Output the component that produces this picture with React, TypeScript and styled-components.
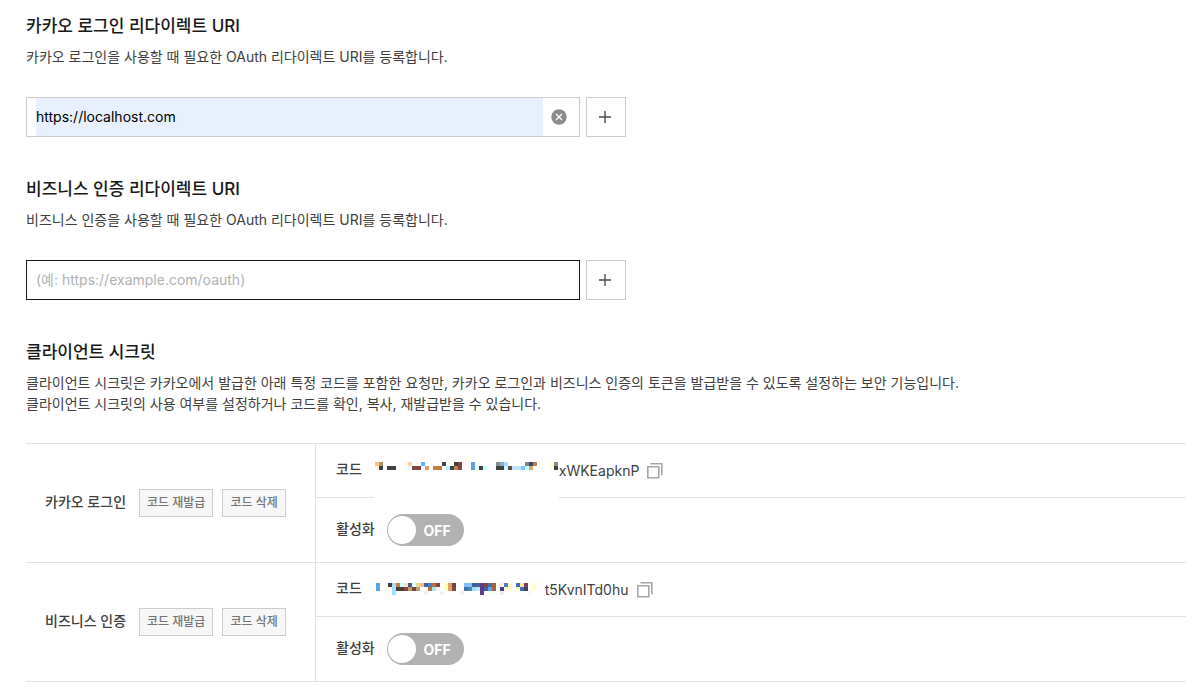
import React, { useState } from "react";
import styled, { createGlobalStyle } from "styled-components";

const GlobalStyle = createGlobalStyle`
  * { box-sizing: border-box; }
  body {
    margin: 0;
    background: #fff;
    color: #404040;
    font-family: Inter, "Noto Sans CJK KR", sans-serif;
    font-size: 14px;
    line-height: 21px;
  }
  button, input { font: inherit; }
`;

const Page = styled.main`
  padding: 14px 15px 8px 26px;
`;

const Section = styled.section`
  & + & { margin-top: 40px; }
`;

const Title = styled.h2`
  margin: 0 0 8px;
  color: #191919;
  font-size: 17px;
  font-weight: 500;
  line-height: 24px;
`;

const Description = styled.p`
  margin: 0;
`;

const UriRow = styled.div`
  display: flex;
  gap: 6px;
  max-width: 600px;
  margin-top: 30px;
`;

const Field = styled.div<{ $active?: boolean }>`
  display: flex;
  flex: 1;
  min-width: 0;
  height: 40px;
  padding: 0 0 0 9px;
  border: 1px solid ${(p) => (p.$active ? "#191919" : "#ccc")};
`;

const UriInput = styled.input<{ $filled?: boolean }>`
  flex: 1;
  min-width: 0;
  padding: 0 0 2px;
  border: 0;
  outline: 0;
  background: ${(p) => (p.$filled ? "#e8f0fe" : "transparent")};
  color: #000;
  font-size: 14px;
  &::placeholder { color: #b2b2b2; opacity: 1; }
`;

const ClearButton = styled.button`
  display: flex;
  align-items: center;
  justify-content: center;
  width: 36px;
  padding: 0 4px 0 0;
  border: 0;
  background: none;
  cursor: pointer;
`;

const AddButton = styled.button`
  display: flex;
  align-items: center;
  justify-content: center;
  width: 40px;
  height: 40px;
  padding: 0 2px 0 0;
  border: 1px solid #ccc;
  background: #fff;
  cursor: pointer;
`;

const SecretTable = styled.table`
  width: 100%;
  margin-top: 29px;
  border-spacing: 0;
  border-top: 1px solid #e2e2e2;
`;

const HeadCell = styled.th`
  width: 290px;
  padding: 0 0 0 19px;
  border-right: 1px solid #e2e2e2;
  border-bottom: 1px solid #e2e2e2;
  font-weight: 500;
  text-align: left;
`;

const HeadContent = styled.div`
  display: flex;
  align-items: center;
`;

const HeadName = styled.span`
  min-width: 82px;
  margin-right: 12px;
  padding-bottom: 4px;
`;

const SmallButton = styled.button`
  height: 28px;
  margin-right: 9px;
  padding: 0 7px;
  border: 1px solid #ccc;
  background: #f7f7f7;
  color: #757575;
  font-size: 12px;
  font-weight: 500;
  line-height: 24px;
  white-space: nowrap;
  cursor: pointer;
`;

const Cell = styled.td<{ $tall?: boolean }>`
  height: ${(p) => (p.$tall ? 65 : 54)}px;
  padding: 0 20px;
  border-bottom: 1px solid #e2e2e2;
`;

const CellContent = styled.div`
  display: flex;
  align-items: center;
  gap: 12px;
`;

const CellLabel = styled.span`
  margin-top: -4px;
  font-weight: 500;
`;

const Code = styled.span`
  display: flex;
  align-items: center;
`;

const MaskSlot = styled.span<{ $width: number }>`
  position: relative;
  width: ${(p) => p.$width}px;
  height: 21px;
`;

const MaskArt = styled.svg`
  position: absolute;
  top: 0;
  left: 0;
  display: block;
`;

const CopyButton = styled.button`
  display: flex;
  margin-left: 7px;
  padding: 0;
  border: 0;
  background: none;
  cursor: pointer;
`;

const Switch = styled.label`
  position: relative;
  display: flex;
  align-items: center;
  width: 77px;
  height: 32px;
  padding: 2px 13px 2px 1px;
  justify-content: space-between;
  border-radius: 16px;
  background: #b2b2b2;
  color: #fff;
  font-weight: 700;
  cursor: pointer;
`;

const SwitchInput = styled.input`
  position: absolute;
  inset: 0;
  width: 100%;
  height: 100%;
  margin: 0;
  opacity: 0;
  cursor: pointer;
`;

const Knob = styled.span`
  width: 28px;
  height: 28px;
  border-radius: 50%;
  background: #fff;
`;

// [x, y, width, colour]; every block is 4px high
type Block = [number, number, number, string];

const LOGIN_MASK: Block[] = [
  [1, 2, 4, "#ffc57f"], [5, 2, 4, "#a8946f"], [34, 2, 4, "#ffd59a"], [47, 2, 4, "#62aef5"],
  [68, 2, 4, "#41425f"], [72, 2, 4, "#fffbe4"], [80, 2, 4, "#414141"], [84, 2, 4, "#864545"],
  [97, 2, 4, "#5fa0e0"], [122, 2, 4, "#8a8a8a"], [126, 2, 4, "#8fa8bf"], [130, 2, 4, "#a0dfff"],
  [151, 2, 4, "#6f8a8a"], [155, 2, 4, "#41425f"], [159, 2, 4, "#b97f50"],
  [176, 2, 4, "#ffffdf"], [180, 2, 4, "#8a8a8a"],
  [1, 6, 4, "#fff3df"], [5, 6, 4, "#414141"], [13, 6, 9, "#414141"], [34, 6, 4, "#dfffff"],
  [38, 6, 9, "#864545"], [51, 6, 4, "#e09a5f"], [59, 6, 9, "#c5823f"], [72, 6, 4, "#b0f5ff"],
  [76, 6, 4, "#41425f"], [80, 6, 4, "#c5823f"], [84, 6, 4, "#864545"], [97, 6, 4, "#5fa0e0"],
  [101, 6, 4, "#e4ffff"], [105, 6, 4, "#414141"], [109, 6, 4, "#bfffff"], [122, 6, 8, "#414141"],
  [130, 6, 4, "#bfffff"], [134, 6, 4, "#6b4a45"], [138, 6, 9, "#bfe2ff"], [147, 6, 4, "#80bfff"],
  [151, 6, 4, "#bfffff"], [155, 6, 4, "#e0a05f"], [176, 6, 4, "#ffffdf"], [180, 6, 4, "#414141"],
];

const BUSINESS_MASK: Block[] = [
  [2, 4, 4, "#5fa0e0"], [14, 4, 4, "#414141"], [18, 4, 4, "#a0dfff"], [22, 4, 4, "#c5823f"],
  [26, 4, 4, "#bfffff"], [30, 4, 4, "#ffdfbf"], [34, 4, 4, "#455f8a"], [38, 4, 4, "#e4ffff"],
  [42, 4, 4, "#dfdfa0"], [46, 4, 4, "#ffbf80"], [50, 4, 4, "#3f62a8"], [54, 4, 4, "#4180b8"],
  [58, 4, 4, "#b9703f"], [62, 4, 4, "#864545"], [70, 4, 4, "#ffffbf"], [74, 4, 4, "#e0a05f"],
  [78, 4, 4, "#6b4545"], [90, 4, 8, "#80bfff"], [98, 4, 4, "#455f8a"], [102, 4, 4, "#3f62a8"],
  [106, 4, 4, "#5f3f86"], [110, 4, 4, "#864545"], [114, 4, 4, "#3f70b0"], [118, 4, 4, "#a5623f"],
  [126, 4, 4, "#fff3d0"], [130, 4, 4, "#4f80c0"], [134, 4, 4, "#ffffbf"],
  [142, 4, 4, "#3f70b0"], [146, 4, 4, "#ffe5a5"], [150, 4, 4, "#7a3f5f"], [158, 4, 4, "#ffffbf"],
  [2, 8, 4, "#5fa0e0"], [10, 8, 4, "#ffffdf"], [18, 8, 4, "#a0dfff"], [22, 8, 8, "#414141"],
  [30, 8, 4, "#864545"], [34, 8, 4, "#c09a60"], [38, 8, 4, "#6b4545"], [42, 8, 4, "#b8a078"],
  [50, 8, 4, "#ffffdf"], [54, 8, 4, "#b9703f"], [58, 8, 4, "#a0e8ff"], [62, 8, 4, "#fff3df"],
  [70, 8, 4, "#ffffbf"], [74, 8, 4, "#e0a05f"], [78, 8, 4, "#864545"], [90, 8, 4, "#3f70b0"],
  [94, 8, 4, "#4f88a8"], [98, 8, 4, "#a0dfff"], [102, 8, 4, "#c0e8ff"], [106, 8, 4, "#5f3f86"],
  [110, 8, 4, "#3f62a8"], [114, 8, 4, "#5fa0e0"], [118, 8, 4, "#a5623f"],
  [126, 8, 4, "#3f3f8a"], [130, 8, 4, "#fff3df"], [134, 8, 4, "#ffffbf"],
  [142, 8, 4, "#ffffbf"], [146, 8, 4, "#3f70b0"], [150, 8, 4, "#41425f"], [158, 8, 4, "#ffffbf"],
  [18, 12, 4, "#a0dfff"], [50, 12, 4, "#eff3ff"], [66, 12, 4, "#eff3ff"], [86, 12, 4, "#f8f0ec"],
  [106, 12, 4, "#5f3f86"], [126, 12, 4, "#f3eaf5"], [154, 12, 4, "#f5fbff"],
];

interface MaskProps {
  blocks: Block[];
  width: number;
  height: number;
}

function Mask({ blocks, width, height }: MaskProps) {
  return (
    <MaskSlot $width={width}>
      <MaskArt width={width} height={height} shapeRendering="crispEdges" aria-hidden="true">
        <rect width={width} height={height} fill="#fff" />
        {blocks.map(([x, y, w, fill]) => (
          <rect key={`${x}-${y}`} x={x} y={y} width={w} height="4" fill={fill} />
        ))}
      </MaskArt>
    </MaskSlot>
  );
}

function UriSection(props: { id: string; title: string; description: string; initial: string; active?: boolean }) {
  const [value, setValue] = useState(props.initial);
  return (
    <Section>
      <Title id={props.id}>{props.title}</Title>
      <Description>{props.description}</Description>
      <UriRow>
        <Field $active={props.active}>
          <UriInput
            type="text"
            aria-labelledby={props.id}
            placeholder="(예: https://example.com/oauth)"
            $filled={value !== ""}
            value={value}
            onChange={(e) => setValue(e.target.value)}
          />
          {value !== "" && (
            <ClearButton type="button" aria-label="지우기" onClick={() => setValue("")}>
              <svg width="16" height="16" viewBox="0 0 16 16">
                <circle cx="8" cy="8" r="7.7" fill="#8c8c8c" />
                <path d="M5 5l6 6M11 5l-6 6" stroke="#fff" strokeWidth="1.3" />
              </svg>
            </ClearButton>
          )}
        </Field>
        <AddButton type="button" aria-label="추가">
          <svg width="12" height="12" viewBox="0 0 12 12">
            <path d="M6 0v12M0 6h12" stroke="#4c4c4c" strokeWidth="1.4" />
          </svg>
        </AddButton>
      </UriRow>
    </Section>
  );
}

function SecretRows(props: { name: string; tail: string; mask: MaskProps }) {
  return (
    <tbody>
      <tr>
        <HeadCell rowSpan={2} scope="rowgroup">
          <HeadContent>
            <HeadName>{props.name}</HeadName>
            <SmallButton type="button">코드 재발급</SmallButton>
            <SmallButton type="button">코드 삭제</SmallButton>
          </HeadContent>
        </HeadCell>
        <Cell>
          <CellContent>
            <CellLabel>코드</CellLabel>
            <Code>
              <Mask {...props.mask} />
              {props.tail}
              <CopyButton type="button" aria-label="복사">
                <svg width="18" height="18" viewBox="0 0 18 18" fill="none" stroke="#a6a6a6" strokeWidth="1.6">
                  <path d="M1.8 4.8h11v11h-11z" />
                  <path d="M4.5 1.8h11.3v11.4" />
                </svg>
              </CopyButton>
            </Code>
          </CellContent>
        </Cell>
      </tr>
      <tr>
        <Cell $tall>
          <CellContent>
            <CellLabel>활성화</CellLabel>
            <Switch>
              <SwitchInput type="checkbox" role="switch" aria-label={`${props.name} 활성화`} />
              <Knob />
              OFF
            </Switch>
          </CellContent>
        </Cell>
      </tr>
    </tbody>
  );
}

export default function App() {
  return (
    <>
      <GlobalStyle />
      <Page>
        <UriSection
          id="login-uri"
          title="카카오 로그인 리다이렉트 URI"
          description="카카오 로그인을 사용할 때 필요한 OAuth 리다이렉트 URI를 등록합니다."
          initial="https://localhost.com"
        />
        <UriSection
          id="business-uri"
          title="비즈니스 인증 리다이렉트 URI"
          description="비즈니스 인증을 사용할 때 필요한 OAuth 리다이렉트 URI를 등록합니다."
          initial=""
          active
        />
        <Section>
          <Title>클라이언트 시크릿</Title>
          <Description>
            클라이언트 시크릿은 카카오에서 발급한 아래 특정 코드를 포함한 요청만, 카카오 로그인과 비즈니스 인증의 토큰을 발급받을 수 있도록 설정하는 보안 기능입니다.
            <br />
            클라이언트 시크릿의 사용 여부를 설정하거나 코드를 확인, 복사, 재발급받을 수 있습니다.
          </Description>
          <SecretTable>
            <SecretRows name="카카오 로그인" tail="xWKEapknP" mask={{ blocks: LOGIN_MASK, width: 185, height: 40 }} />
            <SecretRows name="비즈니스 인증" tail="t5KvnITd0hu" mask={{ blocks: BUSINESS_MASK, width: 171, height: 21 }} />
          </SecretTable>
        </Section>
      </Page>
    </>
  );
}
